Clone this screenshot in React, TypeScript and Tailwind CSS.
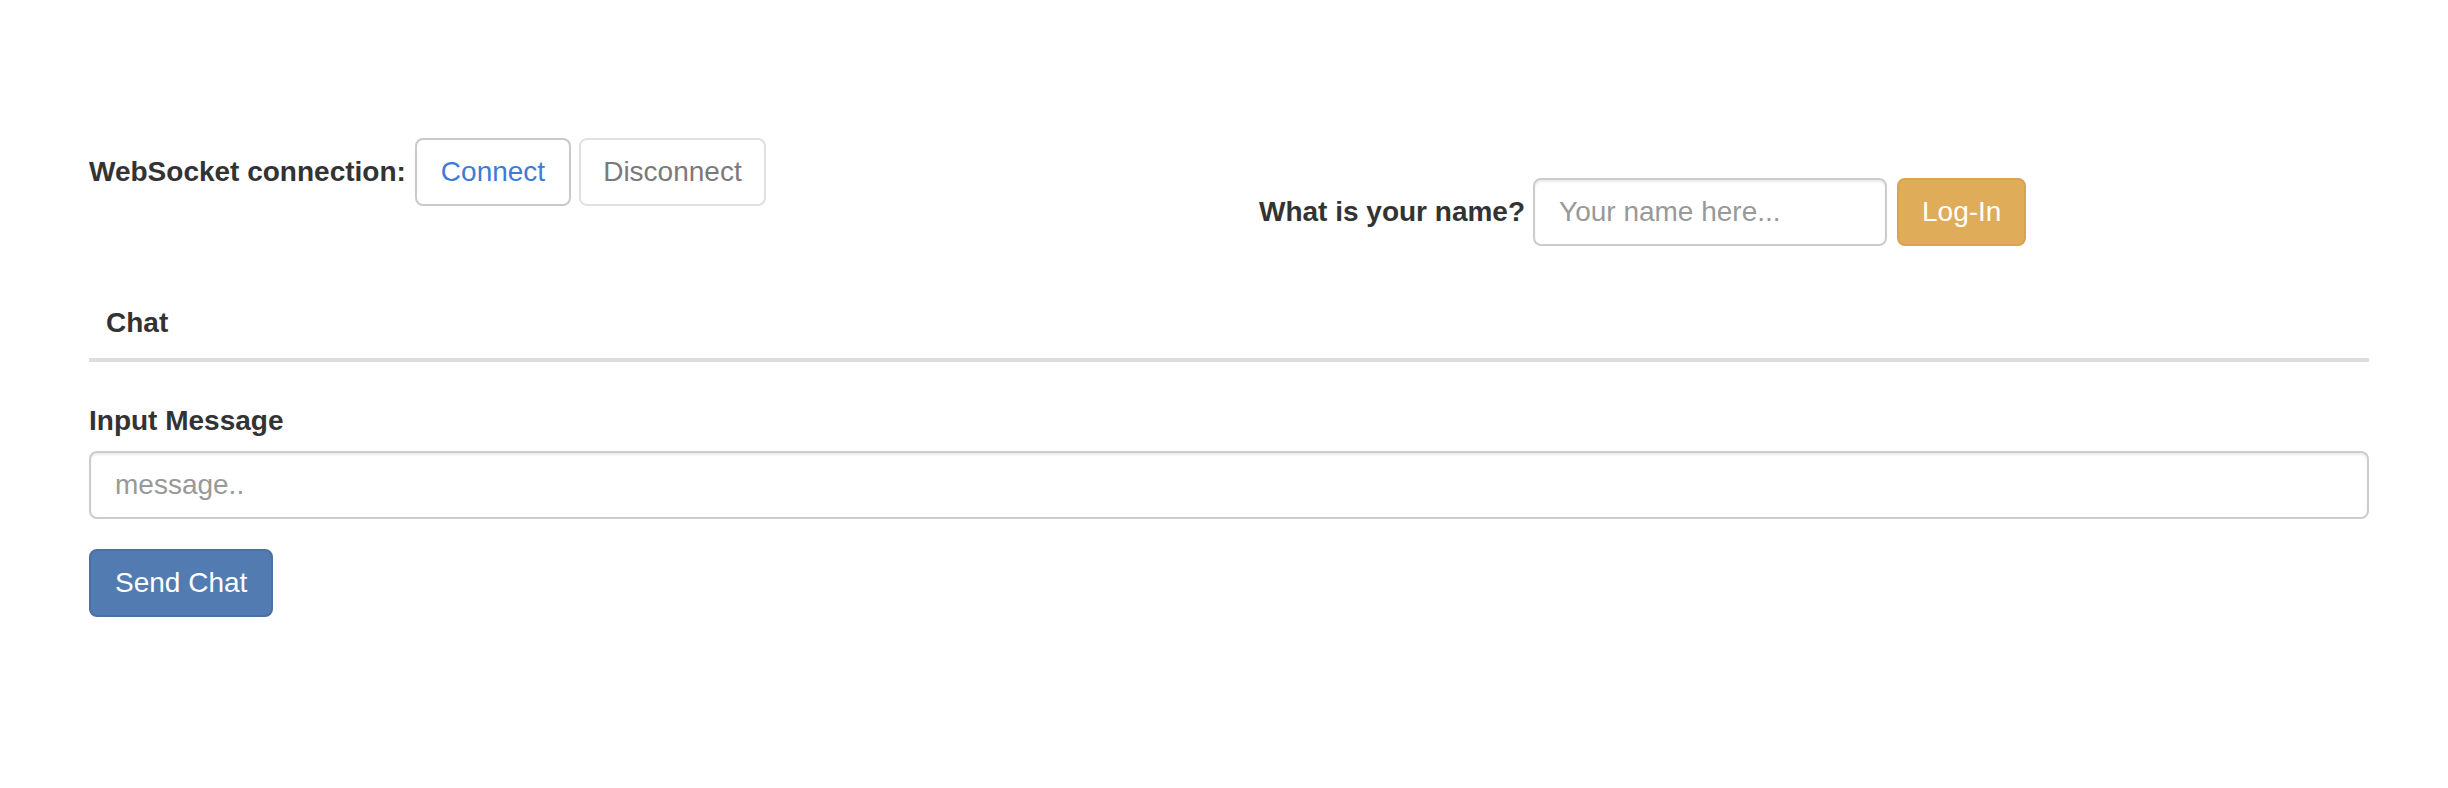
export default function App() {
  return (
    <div className="min-h-[788px] bg-white pl-[89px] pr-[79px] pt-[138px] font-['Liberation_Sans',Arial,sans-serif] text-[28px] leading-[40px] text-[#333]">
      <div className="grid grid-cols-2 items-start gap-x-[60px]">
        <div className="flex items-center">
          <label className="mr-[9px] font-bold">WebSocket connection:</label>
          <button className="h-[68px] rounded-[8px] border-2 border-[#c9c9c9] bg-white px-[24px] text-[#3f7bd4]">
            Connect
          </button>
          <button className="ml-[8px] h-[68px] rounded-[8px] border-2 border-[#e0e0e0] bg-white px-[22px] text-[#7a7a7a]">
            Disconnect
          </button>
        </div>
        <div className="mt-[40px] flex items-center">
          <label className="mr-[8px] font-bold">What is your name?</label>
          <input
            type="text"
            placeholder="Your name here..."
            className="h-[68px] w-[354px] rounded-[8px] border-2 border-[#ccc] px-[24px] text-[28px] shadow-[inset_0_2px_2px_rgba(0,0,0,0.075)] outline-none placeholder:text-[#999]"
          />
          <button className="ml-[10px] h-[68px] rounded-[8px] border-2 border-[#d8a24f] bg-[#dfac5a] px-[23px] text-white">
            Log-In
          </button>
        </div>
      </div>

      <div className="mt-[57px] border-b-4 border-[#ddd] pb-[15px] pl-[17px] font-bold">Chat</div>

      <div className="mt-[39px]">
        <label className="block font-bold">Input Message</label>
        <input
          type="text"
          placeholder="message.."
          className="mt-[10px] block h-[68px] w-full rounded-[8px] border-2 border-[#ccc] px-[24px] text-[28px] shadow-[inset_0_2px_2px_rgba(0,0,0,0.075)] outline-none placeholder:text-[#999]"
        />
        <button className="mt-[30px] h-[68px] rounded-[8px] border-2 border-[#4a70a6] bg-[#527bb2] px-[24px] text-white">
          Send Chat
        </button>
      </div>
    </div>
  );
}
